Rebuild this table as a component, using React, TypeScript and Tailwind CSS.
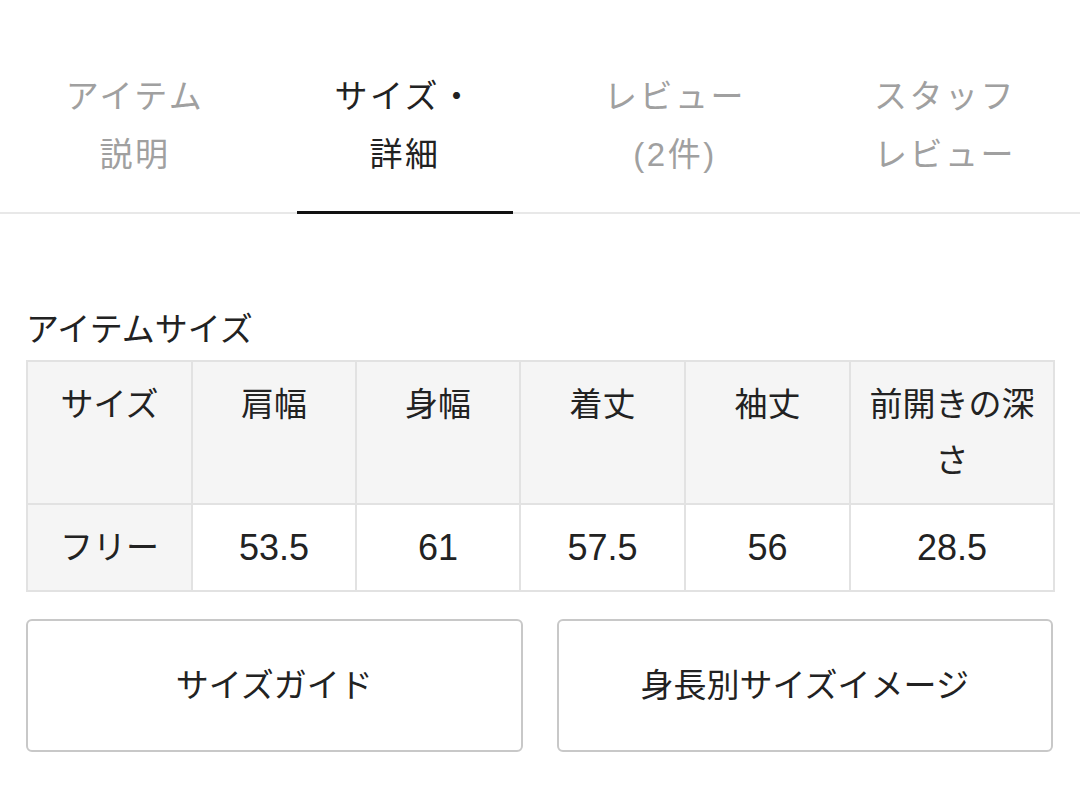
const font = "font-['Liberation_Sans','Noto_Sans_CJK_JP',sans-serif]"

const tabs = [
  { l1: "アイテム", l2: "説明", active: false },
  { l1: "サイズ・", l2: "詳細", active: true },
  { l1: "レビュー", l2: "(2件)", active: false },
  { l1: "スタッフ", l2: "レビュー", active: false },
]

const headers = ["サイズ", "肩幅", "身幅", "着丈", "袖丈", "前開きの深さ"]
const values = ["フリー", "53.5", "61", "57.5", "56", "28.5"]
const widths = ["w-[165px]", "w-[164px]", "w-[164px]", "w-[165px]", "w-[165px]", "w-[204px]"]

export default function App() {
  return (
    <div className={`w-[1080px] h-[795px] bg-white text-[#222] ${font}`}>
      <div className="flex pt-[68px] border-b-2 border-[#e8e8e8]">
        {tabs.map((t) => (
          <div key={t.l1} className="relative flex-1 pb-[28px] text-center">
            <div
              className={`text-[33px] leading-[58px] tracking-[2.5px] ${
                t.active ? "text-[#222]" : "text-[#a0a0a0]"
              }`}
            >
              <div>{t.l1}</div>
              <div>{t.l2}</div>
            </div>
            {t.active && (
              <div className="absolute left-1/2 -translate-x-1/2 bottom-[-2px] h-[3px] w-[216px] bg-[#111]" />
            )}
          </div>
        ))}
      </div>

      <div className="px-[26px]">
        <div className="mt-[96px] text-[33px] leading-[40px]">アイテムサイズ</div>

        <table className="mt-[10px] w-[1027px] border-collapse table-fixed text-[33px]">
          <tbody>
            <tr className="bg-[#f5f5f5]">
              {headers.map((h, i) => (
                <td
                  key={h}
                  className={`${widths[i]} h-[143px] border-2 border-[#e2e2e2] align-top text-center px-[10px] pt-[15px] pb-0 leading-[56px]`}
                >
                  {h}
                </td>
              ))}
            </tr>
            <tr>
              {values.map((v, i) => (
                <td
                  key={v}
                  className={`h-[87px] border-2 border-[#e2e2e2] text-center align-middle leading-[56px] ${
                    i === 0 ? "bg-[#f5f5f5] text-[33px]" : "bg-white text-[36px]"
                  }`}
                >
                  {v}
                </td>
              ))}
            </tr>
          </tbody>
        </table>

        <div className="mt-[27px] flex gap-[34px] w-[1027px]">
          {["サイズガイド", "身長別サイズイメージ"].map((b) => (
            <button
              key={b}
              className="flex-1 h-[133px] border-2 border-[#c8c8c8] rounded-[6px] bg-white text-[33px] text-[#222] flex items-center justify-center"
            >
              {b}
            </button>
          ))}
        </div>
      </div>
    </div>
  )
}
